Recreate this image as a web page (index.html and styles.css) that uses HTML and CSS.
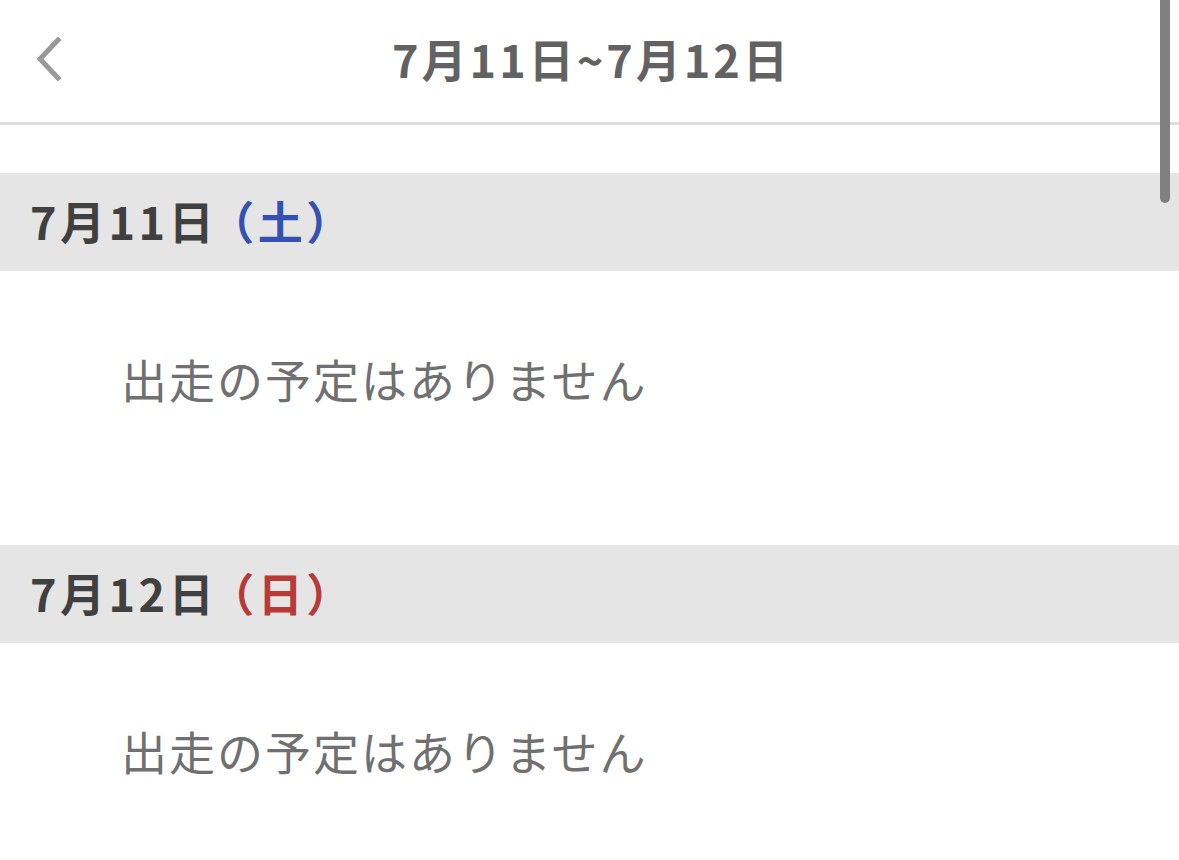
FILE: index.html
```html
<!DOCTYPE html>
<html lang="ja">
<head>
    <meta charset="UTF-8">
    <meta name="viewport" content="width=device-width, initial-scale=1.0">
    <title>出走予定</title>
    <link rel="stylesheet" href="styles.css">
</head>
<body>
    <div class="screen">
        <header class="nav">
            <a class="back" href="#" aria-label="戻る">
                <svg width="26" height="44" viewBox="0 0 26 44">
                    <polyline points="22,3 4,22 22,41" fill="none" stroke="#999" stroke-width="5" stroke-linecap="square"/>
                </svg>
            </a>
            <h1 class="nav-title">7月11日~7月12日</h1>
        </header>

        <div class="days">
            <section class="day">
                <h2 class="day-head">7月11日<span class="sat">（土）</span></h2>
                <p class="empty">出走の予定はありません</p>
            </section>
            <section class="day">
                <h2 class="day-head">7月12日<span class="sun">（日）</span></h2>
                <p class="empty">出走の予定はありません</p>
            </section>
        </div>

        <div class="scroll-thumb"></div>
    </div>
</body>
</html>
```

FILE: styles.css
```css
html, body {
    margin: 0;
    padding: 0;
    background-color: #fff;
    font-family: "Noto Sans CJK JP", "Noto Sans", sans-serif;
}

.screen {
    position: relative;
    width: 1179px;
    height: 860px;
    overflow: hidden;
}

.nav {
    position: relative;
    height: 122px;
    display: flex;
    align-items: center;
    justify-content: center;
    border-bottom: 3px solid #dddddd;
}

.back {
    position: absolute;
    left: 36px;
    top: 37px;
    display: block;
    line-height: 0;
}

.nav-title {
    margin: 0 0 6px 4px;
    font-size: 45px;
    font-weight: 700;
    color: #626262;
    letter-spacing: 3px;
}

.days {
    padding-top: 48px;
}

.day-head {
    margin: 0;
    height: 98px;
    box-sizing: border-box;
    display: flex;
    align-items: center;
    padding: 0 0 4px 30px;
    background-color: #e5e5e5;
    font-size: 45px;
    font-weight: 700;
    color: #404040;
    letter-spacing: 3.5px;
}

.day-head span {
    margin-left: -8px;
}

.sat {
    color: #3450b4;
}

.sun {
    color: #b83a38;
}

.empty {
    margin: 0;
    padding: 72px 0 132px 121px;
    font-size: 46px;
    line-height: 70px;
    color: #707070;
    letter-spacing: 2px;
}

.scroll-thumb {
    position: absolute;
    top: 0;
    right: 9px;
    width: 10px;
    height: 203px;
    background-color: #808080;
    border-radius: 0 0 5px 5px;
}
```
